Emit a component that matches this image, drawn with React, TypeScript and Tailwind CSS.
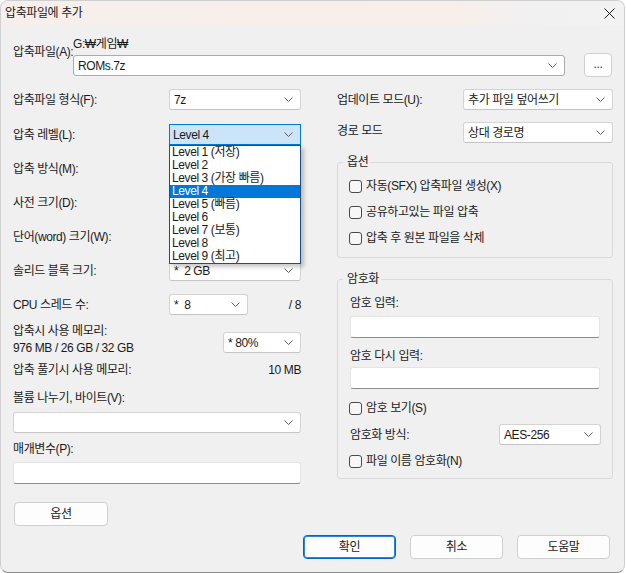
import type { ReactNode } from 'react'

const Chevron = () => (
    <svg width="9" height="5" viewBox="0 0 9 5" className="shrink-0">
        <path d="M0.5 0.5 L4.5 4.5 L8.5 0.5" fill="none" stroke="#5c5c5c" strokeWidth="1" />
    </svg>
)

const Combo = ({ value = '', className = '' }: { value?: string; className?: string }) => (
    <div className={`flex h-[21px] items-center justify-between rounded-[3px] border border-[#d3d3d3] border-b-[#c4c4c4] bg-white pl-[4px] pr-[7px] ${className}`}>
        <span className="whitespace-pre">{value}</span>
        <Chevron />
    </div>
)

const TextBox = ({ className = '' }: { className?: string }) => (
    <div className={`h-[22px] rounded-[3px] border border-[#e4e4e4] border-b-[#8d8d8d] bg-white ${className}`} />
)

const Check = ({ label }: { label: string }) => (
    <div className="flex h-[16px] items-center gap-[4px]">
        <span className="h-[13px] w-[13px] rounded-[3px] border border-[#4a4a4a] bg-[#f7f7f7]" />
        <span>{label}</span>
    </div>
)

const Btn = ({ children, primary = false, className = '' }: { children: ReactNode; primary?: boolean; className?: string }) => (
    <button
        className={`flex h-[24px] w-[93px] items-center justify-center rounded-[4px] border bg-[#fdfdfd] ${
            primary ? 'border-[#0067c0] shadow-[inset_0_0_0_1px_#2f86d6]' : 'border-[#d0d0d0]'
        } ${className}`}
    >
        {children}
    </button>
)

const levels = [
    'Level 1 (저장)',
    'Level 2',
    'Level 3 (가장 빠름)',
    'Level 4',
    'Level 5 (빠름)',
    'Level 6',
    'Level 7 (보통)',
    'Level 8',
    'Level 9 (최고)',
]

const Row = ({ label, children, className = '' }: { label: string; children: ReactNode; className?: string }) => (
    <div className={`flex h-[21px] items-center ${className}`}>
        <span className="w-[156px] shrink-0">{label}</span>
        {children}
    </div>
)

export default function App() {
    return (
        <div className="h-[573px] w-[626px] bg-white font-['Liberation_Sans','Noto_Sans_CJK_KR',sans-serif] text-[12px] leading-[12px] tracking-[-0.4px] text-[#1a1a1a]">
            <div className="flex h-[573px] w-[625px] flex-col overflow-hidden rounded-[8px] border border-[#cfcfcf] border-b-[#8a8a8a] bg-[#f0f0f0]">
                {/* title bar */}
                <div className="flex h-[24px] shrink-0 items-center justify-between bg-[linear-gradient(90deg,#f6efec_0%,#f8eeea_72%,#f2f1f1_84%,#f2f2f2_100%)] pl-[4px] pr-[9px]">
                    <span>압축파일에 추가</span>
                    <svg width="11" height="11" viewBox="0 0 11 11">
                        <path d="M0.5 0.5 L10.5 10.5 M10.5 0.5 L0.5 10.5" stroke="#1a1a1a" strokeWidth="1" />
                    </svg>
                </div>

                {/* archive path */}
                <div className="mt-[13px] flex pl-[12px]">
                    <span className="w-[60px] shrink-0 whitespace-nowrap pt-[8px]">압축파일(A):</span>
                    <div className="flex w-[492px] flex-col">
                        <span className="h-[12px]">G:₩게임₩</span>
                        <div className="mt-[5px] flex h-[21px] items-center justify-between rounded-[3px] border border-[#ababab] bg-white pl-[4px] pr-[7px]">
                            <span>ROMs.7z</span>
                            <Chevron />
                        </div>
                    </div>
                    <button className="ml-[19px] mt-[15px] flex h-[24px] w-[28px] items-center justify-center rounded-[4px] border border-[#d0d0d0] bg-[#fdfdfd] pb-[3px] text-[#3b2b4b]">
                        ...
                    </button>
                </div>

                <div className="mt-[12px] flex pl-[12px]">
                    {/* left column */}
                    <div className="flex w-[288px] flex-col">
                        <Row label="압축파일 형식(F):">
                            <Combo value="7z" className="w-[132px]" />
                        </Row>
                        <Row label="압축 레벨(L):" className="mt-[14px]">
                            <div className="relative w-[132px]">
                                <div className="flex h-[21px] items-center justify-between border border-[#0078d7] bg-[#cce4f7] pl-[3px] pr-[7px]">
                                    <span>Level 4</span>
                                    <Chevron />
                                </div>
                                <div className="absolute left-0 top-full z-10 w-[132px] border border-[#1d4f85] bg-white shadow-[3px_3px_4px_rgba(0,0,0,0.22)]">
                                    {levels.map((l) => (
                                        <div
                                            key={l}
                                            className={`h-[13px] pl-[2px] leading-[13px] ${l === 'Level 4' ? 'bg-[#0078d7] text-white' : ''}`}
                                        >
                                            {l}
                                        </div>
                                    ))}
                                </div>
                            </div>
                        </Row>
                        {/* these three combos sit under the open list */}
                        <Row label="압축 방식(M):" className="mt-[13px]">
                            <Combo className="w-[132px]" />
                        </Row>
                        <Row label="사전 크기(D):" className="mt-[13px]">
                            <Combo className="w-[132px]" />
                        </Row>
                        <Row label="단어(word) 크기(W):" className="mt-[13px]">
                            <Combo className="w-[132px]" />
                        </Row>
                        <Row label="솔리드 블록 크기:" className="mt-[13px]">
                            <Combo value="*  2 GB" className="w-[132px]" />
                        </Row>
                        <Row label="CPU 스레드 수:" className="mt-[13px]">
                            <Combo value="*  8" className="w-[79px]" />
                            <span className="flex-1 text-right">/ 8</span>
                        </Row>

                        <div className="mt-[10px] flex items-start justify-between">
                            <div className="flex flex-col gap-[5px]">
                                <span>압축시 사용 메모리:</span>
                                <span>976 MB / 26 GB / 32 GB</span>
                            </div>
                            <Combo value="* 80%" className="mt-[7px] w-[78px]" />
                        </div>
                        <div className="mt-[10px] flex justify-between">
                            <span>압축 풀기시 사용 메모리:</span>
                            <span>10 MB</span>
                        </div>

                        <span className="mt-[16px]">볼륨 나누기, 바이트(V):</span>
                        <Combo className="mt-[8px] w-full" />

                        <span className="mt-[10px]">매개변수(P):</span>
                        <TextBox className="mt-[7px] w-full" />
                    </div>

                    {/* right column */}
                    <div className="ml-[36px] flex w-[276px] flex-col">
                        <div className="flex h-[21px] items-center">
                            <span className="w-[126px] shrink-0">업데이트 모드(U):</span>
                            <Combo value="추가 파일 덮어쓰기" className="w-[150px]" />
                        </div>
                        <div className="mt-[12px] flex h-[21px] items-center">
                            <span className="w-[126px] shrink-0 pb-[3px]">경로 모드</span>
                            <Combo value="상대 경로명" className="w-[150px]" />
                        </div>

                        <fieldset className="mt-[13px] rounded-[3px] border border-[#dadada] p-0">
                            <legend className="ml-[5px] pl-[4px] pr-[2px] leading-[12px]">옵션</legend>
                            <div className="flex flex-col gap-[10px] pb-[11px] pl-[11px] pt-[10px]">
                                <Check label="자동(SFX) 압축파일 생성(X)" />
                                <Check label="공유하고있는 파일 압축" />
                                <Check label="압축 후 원본 파일을 삭제" />
                            </div>
                        </fieldset>

                        <fieldset className="mt-[15px] rounded-[3px] border border-[#dadada] p-0">
                            <legend className="ml-[5px] pl-[4px] pr-[2px] leading-[12px]">암호화</legend>
                            <div className="flex flex-col pb-[9px] pl-[11px] pr-[11px]">
                                <span className="ml-[1px] mt-[12px]">암호 입력:</span>
                                <TextBox className="ml-[1px] mt-[7px] w-[250px]" />
                                <span className="ml-[1px] mt-[12px]">암호 다시 입력:</span>
                                <TextBox className="ml-[1px] mt-[5px] w-[250px]" />
                                <div className="mt-[11px]">
                                    <Check label="암호 보기(S)" />
                                </div>
                                <div className="mt-[8px] flex h-[21px] items-center justify-between">
                                    <span className="ml-[1px]">암호화 방식:</span>
                                    <Combo value="AES-256" className="w-[102px]" />
                                </div>
                                <div className="mt-[8px]">
                                    <Check label="파일 이름 암호화(N)" />
                                </div>
                            </div>
                        </fieldset>
                    </div>
                </div>

                {/* buttons */}
                <div className="mt-[18px] pl-[13px]">
                    <Btn className="h-[23px] w-[94px]">옵션</Btn>
                </div>
                <div className="mt-[9px] flex justify-end gap-[14px] pr-[14px]">
                    <Btn primary>확인</Btn>
                    <Btn>취소</Btn>
                    <Btn>도움말</Btn>
                </div>
            </div>
        </div>
    )
}
